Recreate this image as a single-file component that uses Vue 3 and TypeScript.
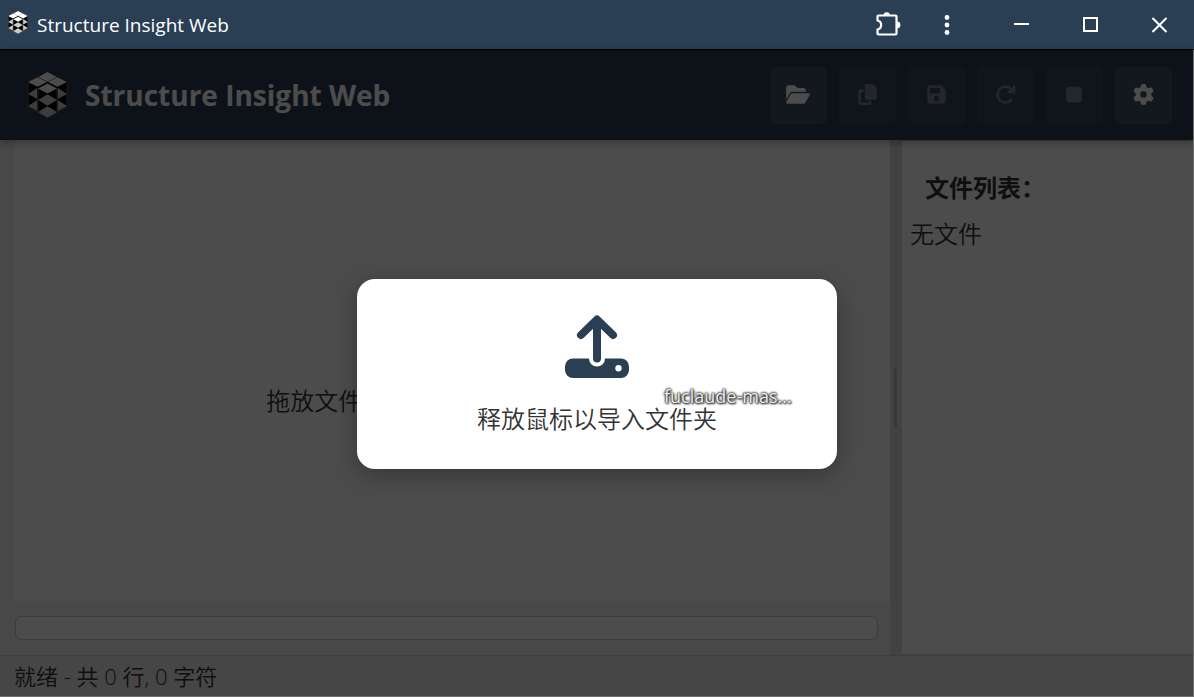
<script setup lang="ts">
interface Tool { label: string; box: string; path: string; width: number; disabled: boolean }

const appName = 'Structure Insight Web'

const tools: Tool[] = [
  { label: '打开文件夹', box: '0 0 576 512', width: 24, disabled: false, path: 'M88.7 223.8L0 375.8V96C0 60.7 28.7 32 64 32H181.5c17 0 33.3 6.7 45.3 18.7l26.5 26.5c12 12 28.3 18.7 45.3 18.7H416c35.3 0 64 28.7 64 64v32H144c-22.8 0-43.8 12.1-55.3 31.8zm27.6 16.1C122.1 230 132.6 224 144 224H544c11.5 0 22 6.1 27.7 16.1s5.7 22.2-.1 32.1l-112 192C453.9 474 443.4 480 432 480H32c-11.5 0-22-6.1-27.7-16.1s-5.7-22.2 .1-32.1l112-192z' },
  { label: '复制', box: '0 0 448 512', width: 19, disabled: true, path: 'M208 0H332.1c12.7 0 24.9 5.1 33.9 14.1l67.9 67.9c9 9 14.1 21.2 14.1 33.9V336c0 26.5-21.5 48-48 48H208c-26.5 0-48-21.5-48-48V48c0-26.5 21.5-48 48-48zM48 128h80v64H64V448H256V416h64v48c0 26.5-21.5 48-48 48H48c-26.5 0-48-21.5-48-48V176c0-26.5 21.5-48 48-48z' },
  { label: '保存', box: '0 0 448 512', width: 19, disabled: true, path: 'M64 32C28.7 32 0 60.7 0 96V416c0 35.3 28.7 64 64 64H384c35.3 0 64-28.7 64-64V173.3c0-17-6.7-33.3-18.7-45.3L352 50.7C340 38.7 323.7 32 306.7 32H64zm0 96c0-17.7 14.3-32 32-32H288c17.7 0 32 14.3 32 32v64c0 17.7-14.3 32-32 32H96c-17.7 0-32-14.3-32-32V128zM224 288a64 64 0 1 1 0 128 64 64 0 1 1 0-128z' },
  { label: '刷新', box: '0 0 512 512', width: 21, disabled: true, path: 'M386.3 160H336c-17.7 0-32 14.3-32 32s14.3 32 32 32H464c17.7 0 32-14.3 32-32V64c0-17.7-14.3-32-32-32s-32 14.3-32 32v51.2L414.4 97.6c-87.5-87.5-229.3-87.5-316.8 0s-87.5 229.3 0 316.8s229.3 87.5 316.8 0c12.5-12.5 12.5-32.8 0-45.3s-32.8-12.5-45.3 0c-62.5 62.5-163.8 62.5-226.3 0s-62.5-163.8 0-226.3s163.8-62.5 226.3 0L386.3 160z' },
  { label: '停止', box: '0 0 384 512', width: 16, disabled: true, path: 'M0 128C0 92.7 28.7 64 64 64H320c35.3 0 64 28.7 64 64V384c0 35.3-28.7 64-64 64H64c-35.3 0-64-28.7-64-64V128z' },
  { label: '设置', box: '0 0 512 512', width: 21, disabled: false, path: 'M495.9 166.6c3.2 8.7 .5 18.4-6.4 24.6l-43.3 39.4c1.1 8.3 1.7 16.8 1.7 25.4s-.6 17.1-1.7 25.4l43.3 39.4c6.9 6.2 9.6 15.9 6.4 24.6c-4.4 11.9-9.7 23.3-15.8 34.3l-4.7 8.1c-6.6 11-14 21.4-22.1 31.2c-5.9 7.2-15.7 9.6-24.5 6.8l-55.7-17.7c-13.4 10.3-28.2 18.9-44 25.4l-12.5 57.1c-2 9.1-9 16.3-18.2 17.8c-13.8 2.3-28 3.5-42.5 3.5s-28.7-1.2-42.5-3.5c-9.2-1.5-16.2-8.7-18.2-17.8l-12.5-57.1c-15.8-6.5-30.6-15.1-44-25.4L83.1 425.9c-8.8 2.8-18.6 .3-24.5-6.8c-8.1-9.8-15.5-20.2-22.1-31.2l-4.7-8.1c-6.1-11-11.4-22.4-15.8-34.3c-3.2-8.7-.5-18.4 6.4-24.6l43.3-39.4C64.6 273.1 64 264.6 64 256s.6-17.1 1.7-25.4L22.4 191.2c-6.9-6.2-9.6-15.9-6.4-24.6c4.4-11.9 9.7-23.3 15.8-34.3l4.7-8.1c6.6-11 14-21.4 22.1-31.2c5.9-7.2 15.7-9.6 24.5-6.8l55.7 17.7c13.4-10.3 28.2-18.9 44-25.4l12.5-57.1c2-9.1 9-16.3 18.2-17.8C227.3 1.2 241.5 0 256 0s28.7 1.2 42.5 3.5c9.2 1.5 16.2 8.7 18.2 17.8l12.5 57.1c15.8 6.5 30.6 15.1 44 25.4l55.7-17.7c8.8-2.8 18.6-.3 24.5 6.8c8.1 9.8 15.5 20.2 22.1 31.2l4.7 8.1c6.1 11 11.4 22.4 15.8 34.3zM256 336a80 80 0 1 0 0-160 80 80 0 1 0 0 160z' },
]
</script>

<template>
  <div class="window">
    <svg class="defs" aria-hidden="true">
      <defs>
        <symbol id="cubes" viewBox="0 0 40 46">
          <path fill="#000" d="M20 0 40 10V35L20 46 0 35V10z" />
          <path fill="#fff" d="M20 0l9.500 5-9.500 4.800-9.500-4.800zM10 5.200l9.500 4.800-9.500 4.800-9.500-4.800zM30 5.200l9.500 4.800-9.500 4.800-9.500-4.800zM20 11.500l9.500 5-9.500 5-9.500-5z" />
          <path fill="#ccc" d="M9.700 16v11L.5 22zM9.700 28v11L.5 34zM30.300 16v11L39.500 22zM30.300 28v11L39.500 34zM20 22.300l9.500 5.700-9.500 5.700-9.500-5.700zM20 34.300l9.500 5.700-9.500 5.700-9.500-5.700z" />
          <path fill="none" stroke="#999" stroke-width=".7" d="M.5 10.500V35L20 45.500 39.500 35V10.500M10.500 16.500v23.500M29.500 16.500v23.500" />
        </symbol>
      </defs>
    </svg>

    <div class="titlebar">
      <svg class="mini-logo" aria-hidden="true"><use href="#cubes" /></svg>
      <span class="caption">{{ appName }}</span>
      <button class="chrome ext" aria-label="扩展程序">
        <svg width="26" height="26" viewBox="0 0 26 26" fill="none" stroke="#fff" stroke-width="2.200" stroke-linejoin="round">
          <path d="M3.500 3.500H20.500q1 0 1 1V21.500q0 1-1 1H3.500q-1 0-1-1V17.500a4.600 4.600 0 0 0 0-9V4.500q0-1 1-1z" />
          <path fill="#fff" stroke="none" d="M8.500 3.500a3.200 3.200 0 0 1 6.400 0zM22 9.500a3.400 3.400 0 0 1 0 6.800z" />
        </svg>
      </button>
      <button class="chrome dots" aria-label="更多">
        <svg width="6" height="22" viewBox="0 0 6 22" fill="#fff"><circle cx="3" cy="3.500" r="2.400" /><circle cx="3" cy="11" r="2.400" /><circle cx="3" cy="18.500" r="2.400" /></svg>
      </button>
      <button class="chrome" aria-label="最小化">
        <svg width="16" height="16" viewBox="0 0 16 16"><path stroke="#fff" stroke-width="2" d="M0 7h15" /></svg>
      </button>
      <button class="chrome" aria-label="最大化">
        <svg width="16" height="16" viewBox="0 0 16 16"><path fill="none" stroke="#fff" stroke-width="2" d="M1 1h13v13H1z" /></svg>
      </button>
      <button class="chrome" aria-label="关闭">
        <svg width="16" height="16" viewBox="0 0 16 16"><path stroke="#fff" stroke-width="2" d="M.5 1l14 14M14.500 1l-14 14" /></svg>
      </button>
    </div>

    <div class="page">
      <header class="header">
        <svg class="logo" aria-hidden="true"><use href="#cubes" /></svg>
        <h1>{{ appName }}</h1>
        <nav class="tools">
          <button v-for="t in tools" :key="t.label" class="tool" :disabled="t.disabled" :aria-label="t.label">
            <svg :width="t.width" height="21" :viewBox="t.box" fill="currentColor" fill-rule="evenodd"><path :d="t.path" /></svg>
          </button>
        </nav>
      </header>

      <div class="body">
        <main class="main">
          <div class="editor">拖放文件夹到这里 或 点击打开按钮</div>
          <div class="search"><input type="text" aria-label="搜索" /></div>
        </main>
        <div class="resizer"><span class="grip"></span></div>
        <aside class="files">
          <h2>文件列表：</h2>
          <p>无文件</p>
        </aside>
      </div>

      <footer class="status">就绪 - 共 0 行, 0 字符</footer>

      <div class="overlay">
        <div class="drop">
          <svg width="64" height="64" viewBox="0 0 64 64" aria-hidden="true">
            <path fill="none" stroke="#2a3f54" stroke-width="8" stroke-linecap="round" stroke-linejoin="round" d="M32 43.500V5M16 20 32 4.500 48 20" />
            <path fill="#2a3f54" fill-rule="evenodd" d="M8 43.500H24a8 8 0 0 0 16 0H56a8 8 0 0 1 8 8V55a8 8 0 0 1-8 8H8a8 8 0 0 1-8-8V51.500a8 8 0 0 1 8-8zM53.500 50a3.200 3.200 0 1 0 0 6.400 3.200 3.200 0 0 0 0-6.400z" />
          </svg>
          <p>释放鼠标以导入文件夹</p>
          <span class="drag-label">fuclaude-mas...</span>
        </div>
      </div>
    </div>
  </div>
</template>

<style>
body { margin: 0; overflow: hidden; }
</style>

<style scoped>
* { box-sizing: border-box; }
.window {
  display: flex; flex-direction: column; height: 100vh; color: #333;
  font-family: "Open Sans", "Noto Sans CJK SC", sans-serif; font-size: 24px;
}
.defs { position: absolute; width: 0; height: 0; }
button { border: 0; padding: 0; display: flex; align-items: center; justify-content: center; }
h1, h2, p { margin: 0; }
.titlebar {
  display: flex; align-items: center; height: 50px; flex: none; padding-left: 8px;
  background: #2a3f54; border-bottom: 1px solid #000; color: #fff;
}
.mini-logo { width: 20px; height: 23px; margin-bottom: 4px; }
.caption { flex: 1; margin-left: 9px; font-size: 19px; line-height: 24px; }
.chrome { width: 69px; height: 49px; background: none; }
.ext { width: 60px; }
.dots { width: 58px; margin-right: 11px; }
.page { position: relative; display: flex; flex-direction: column; flex: 1; min-height: 0; background: #f5f5f5; }
.header {
  position: relative; z-index: 1; display: flex; align-items: center; height: 90px; flex: none;
  padding: 0 22px 0 27px; background: #2d3f55; color: #fff; box-shadow: 0 3px 8px rgba(0, 0, 0, .3);
}
.logo { width: 41px; height: 46px; }
h1 { flex: 1; margin-left: 17px; font-size: 28px; line-height: 40px; font-weight: 680; }
.tools { display: flex; gap: 12px; }
.tool { width: 57px; height: 57px; border-radius: 6px; background: rgba(255, 255, 255, .1); color: #fff; padding: 0 1px 2px 0; }
.tool:disabled { opacity: .35; background: rgba(255, 255, 255, .16); }
.body { display: flex; flex: 1; min-height: 0; }
.main { display: flex; flex-direction: column; flex: 1; min-width: 0; padding-left: 15px; background: #f0f0f0; }
.editor { display: flex; align-items: center; justify-content: center; flex: 1; background: #fff; padding-top: 57px; font-weight: 350; }
.search { padding: 15px 12px 15px 0; }
.search input { display: block; width: 100%; height: 24px; border: 1px solid #c8c8c8; border-radius: 6px; background: #fff; }
.resizer { display: flex; align-items: center; width: 12px; padding-left: 4px; background: #dcdcdc; }
.grip { width: 3px; height: 60px; border-radius: 2px; background: #bbb; }
.files { width: 292px; padding: 27px 8px; background: #fff; border-top: 1px solid #d2d2d2; border-bottom: 1px solid #d2d2d2; }
h2 { padding-left: 15px; font-size: 24px; line-height: 40px; font-weight: 700; color: #333; }
.files p { margin-top: 6px; line-height: 40px; font-weight: 350; }
.status { height: 42px; flex: none; padding-left: 14px; border-top: 1px solid #d0d0d0; background: #e9e9e9; font-size: 22px; line-height: 40px; font-weight: 350; }
.overlay {
  position: absolute; inset: 0; z-index: 2; display: flex; align-items: center; justify-content: center;
  padding: 1px 0 0 1px; border: solid #6e6e6e; border-width: 0 1px 1px 0; background: rgba(0, 0, 0, .7);
}
.drop {
  position: relative; display: flex; flex-direction: column; align-items: center; gap: 20px;
  width: 480px; padding: 36px 24px 30px; border-radius: 18px; background: #fff; box-shadow: 0 6px 24px rgba(0, 0, 0, .3);
}
.drop p { line-height: 40px; font-weight: 350; }
.drag-label {
  position: absolute; left: 307px; top: 105px; font-size: 18px; line-height: 24px; color: #eee;
  text-shadow: 0 0 2px #333, 0 0 2px #333, 0 0 3px #333, 1px 1px 2px #333;
}
</style>
